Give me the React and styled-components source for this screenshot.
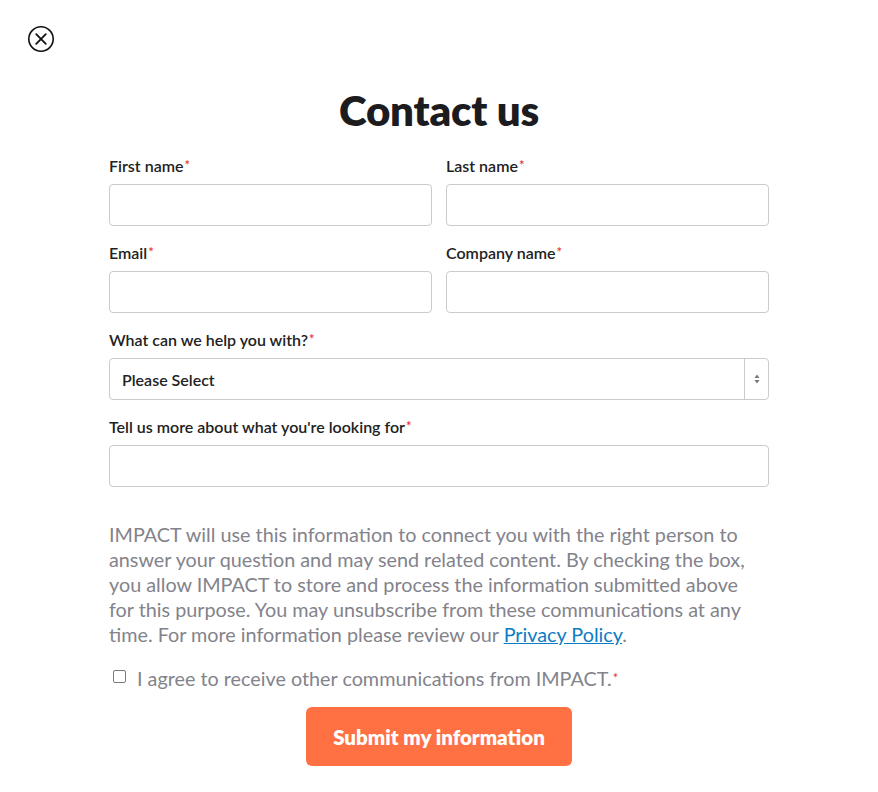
import styled, { createGlobalStyle } from 'styled-components';

const GlobalStyle = createGlobalStyle`
  body {
    margin: 0;
    background: #ffffff;
    font-family: Lato, "Open Sans", Arial, sans-serif;
    color: #1f1f23;
  }
`;

function CloseIcon() {
  return (
    <svg width="28" height="28" viewBox="0 0 28 28" fill="none">
      <circle cx="14" cy="14" r="12.2" stroke="#111" strokeWidth="1.6" />
      <path d="M9.2 9.2 L18.8 18.8 M18.8 9.2 L9.2 18.8" stroke="#111" strokeWidth="1.8" strokeLinecap="round" />
    </svg>
  );
}

function Field({ label, children }) {
  return (
    <FieldBox>
      <Label>
        {label}
        <Req>*</Req>
      </Label>
      {children}
    </FieldBox>
  );
}

export default function App() {
  return (
    <Page>
      <GlobalStyle />
      <CloseButton aria-label="Close">
        <CloseIcon />
      </CloseButton>
      <Form>
        <Title>Contact us</Title>
        <Row>
          <Field label="First name">
            <Input />
          </Field>
          <Field label="Last name">
            <Input />
          </Field>
        </Row>
        <Row>
          <Field label="Email">
            <Input />
          </Field>
          <Field label="Company name">
            <Input />
          </Field>
        </Row>
        <Field label="What can we help you with?">
          <SelectBox>
            <SelectText>Please Select</SelectText>
            <Arrows>
              <svg width="8" height="12" viewBox="0 0 8 12">
                <path d="M4 1.5 L6.5 5 L1.5 5 Z" fill="#777" />
                <path d="M4 10.5 L6.5 7 L1.5 7 Z" fill="#777" />
              </svg>
            </Arrows>
          </SelectBox>
        </Field>
        <Field label="Tell us more about what you're looking for">
          <Input />
        </Field>
        <Legal>
          IMPACT will use this information to connect you with the right person to
          <br />
          answer your question and may send related content. By checking the box,
          <br />
          you allow IMPACT to store and process the information submitted above
          <br />
          for this purpose. You may unsubscribe from these communications at any
          <br />
          time. For more information please review our <Link href="#">Privacy Policy</Link>.
        </Legal>
        <Consent>
          <Check />
          <span>
            I agree to receive other communications from IMPACT.<SmallReq>*</SmallReq>
          </span>
        </Consent>
        <Submit>Submit my information</Submit>
      </Form>
    </Page>
  );
}

const Page = styled.div`
  position: relative;
  width: 878px;
  min-height: 792px;
  box-sizing: border-box;
  padding-top: 86px;
`;

const CloseButton = styled.div`
  position: absolute;
  left: 27px;
  top: 25px;
  width: 28px;
  height: 28px;
`;

const Form = styled.div`
  width: 660px;
  margin: 0 0 0 109px;
  display: flex;
  flex-direction: column;
`;

const Title = styled.h1`
  margin: 0 0 22px;
  text-align: center;
  font-size: 42px;
  line-height: 48px;
  font-weight: 800;
  color: #1c1c20;
  letter-spacing: -0.2px;
`;

const Row = styled.div`
  display: grid;
  grid-template-columns: 1fr 1fr;
  gap: 14px;
`;

const FieldBox = styled.div`
  display: flex;
  flex-direction: column;
  margin-bottom: 17px;
`;

const Label = styled.label`
  font-size: 16px;
  line-height: 18px;
  font-weight: 600;
  color: #222;
  margin-bottom: 9px;
`;

const Req = styled.span`
  color: #e8353c;
  font-size: 13px;
  vertical-align: 2px;
  margin-left: 1px;
`;

const Input = styled.input`
  box-sizing: border-box;
  height: 42px;
  width: 100%;
  border: 1px solid #cbcbcb;
  border-radius: 4px;
  background: #fff;
  font-family: inherit;
  font-size: 16px;
  padding: 0 12px;
  outline: none;
`;

const SelectBox = styled.div`
  box-sizing: border-box;
  height: 42px;
  border: 1px solid #cbcbcb;
  border-radius: 4px;
  display: flex;
  align-items: center;
`;

const SelectText = styled.span`
  flex: 1;
  padding-left: 12px;
  font-size: 16px;
  font-weight: 600;
  color: #222;
`;

const Arrows = styled.span`
  width: 23px;
  height: 100%;
  border-left: 1px solid #cbcbcb;
  display: flex;
  align-items: center;
  justify-content: center;
`;

const Legal = styled.p`
  margin: 18px 0 19px;
  font-size: 19.8px;
  line-height: 25px;
  color: #83838b;
  white-space: nowrap;
`;

const Link = styled.a`
  color: #0b7dc4;
  text-decoration: underline;
`;

const Consent = styled.label`
  display: flex;
  align-items: center;
  gap: 11px;
  padding-left: 4px;
  font-size: 19.8px;
  line-height: 24px;
  color: #83838b;
`;

const Check = styled.span`
  box-sizing: border-box;
  width: 13px;
  height: 13px;
  border: 1.5px solid #7a7a82;
  border-radius: 2px;
  margin-top: -4px;
`;

const SmallReq = styled.span`
  color: #e8353c;
  font-size: 13px;
  vertical-align: 3px;
  margin-left: 1px;
`;

const Submit = styled.button`
  align-self: center;
  margin-top: 17px;
  width: 266px;
  height: 59px;
  border: none;
  border-radius: 6px;
  background: #ff7043;
  color: #fff;
  font-family: inherit;
  font-size: 20.5px;
  font-weight: 800;
`;
